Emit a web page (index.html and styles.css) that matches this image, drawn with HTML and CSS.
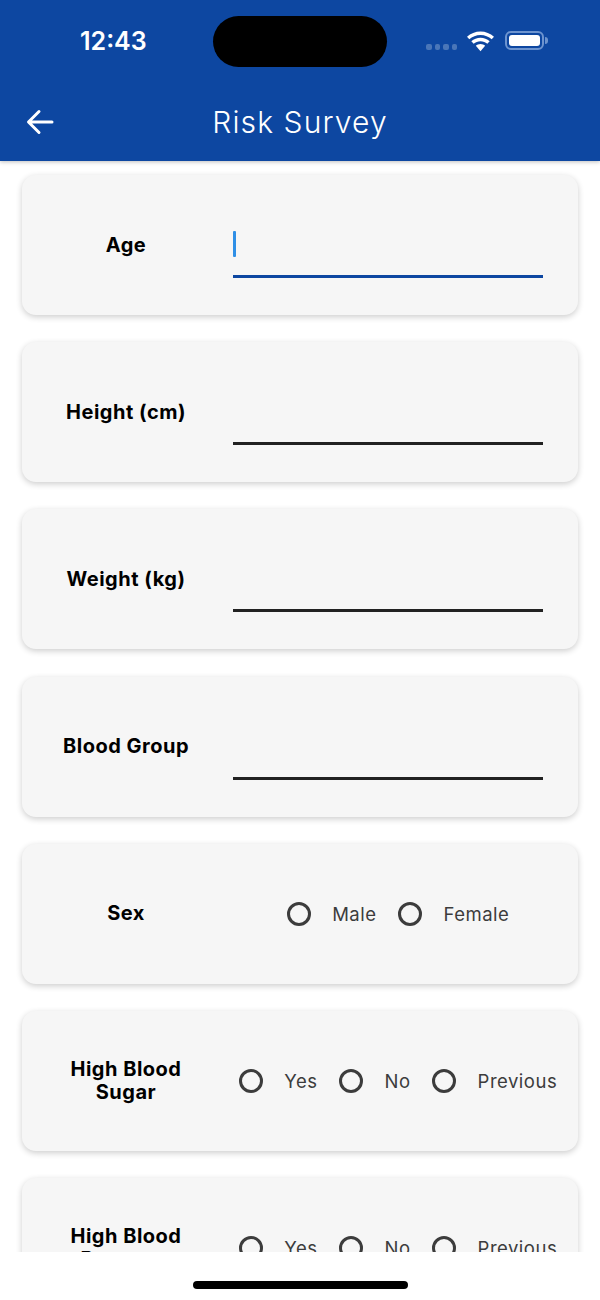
FILE: index.html
```html
<!DOCTYPE html>
<html lang="en">
<head>
<meta charset="utf-8">
<title>Risk Survey</title>
<link rel="stylesheet" href="styles.css">
</head>
<body>
<div class="screen">
  <header class="header">
    <div class="status">
      <div class="time">12:43</div>
      <div class="island"></div>
      <div class="status-icons">
        <div class="signal"><i></i><i></i><i></i><i></i></div>
        <svg class="wifi" viewBox="0 0 26 20" width="31" height="24"><path d="M13 3.200c3.600 0 6.900 1.400 9.400 3.700l1.900-2.100C21.300 2 17.300.3 13 .3S4.700 2 1.700 4.800l1.900 2.100C6.100 4.600 9.400 3.200 13 3.200z" fill="#fff"/><path d="M13 8.500c2.200 0 4.200.8 5.700 2.200l2-2.200C18.600 6.600 15.900 5.500 13 5.500S7.400 6.600 5.300 8.500l2 2.200c1.500-1.400 3.500-2.200 5.700-2.200z" fill="#fff"/><path d="M13 10.800c-1.500 0-2.900.6-3.900 1.500L13 17l3.900-4.700c-1-.9-2.400-1.500-3.900-1.500z" fill="#fff"/></svg>
        <div class="battery"><div class="battery-body"><div class="battery-fill"></div></div><div class="battery-cap"></div></div>
      </div>
    </div>
    <div class="nav">
      <svg class="back" viewBox="0 0 28 26" width="28" height="26"><path d="M26 13H3M13 2.500 2.500 13 13 23.500" fill="none" stroke="#fff" stroke-width="3" stroke-linecap="round" stroke-linejoin="round"/></svg>
      <h1 class="title">Risk Survey</h1>
    </div>
  </header>
  <main class="scroller">
    <section class="card">
      <div class="label">Age</div>
      <div class="field active"><span class="caret"></span></div>
    </section>
    <section class="card">
      <div class="label">Height (cm)</div>
      <div class="field"></div>
    </section>
    <section class="card">
      <div class="label">Weight (kg)</div>
      <div class="field"></div>
    </section>
    <section class="card">
      <div class="label">Blood Group</div>
      <div class="field"></div>
    </section>
    <section class="card">
      <div class="label">Sex</div>
      <div class="options">
        <span class="radio"></span><span class="opt">Male</span>
        <span class="radio"></span><span class="opt">Female</span>
      </div>
    </section>
    <section class="card">
      <div class="label">High Blood<br>Sugar</div>
      <div class="options">
        <span class="radio"></span><span class="opt">Yes</span>
        <span class="radio"></span><span class="opt">No</span>
        <span class="radio"></span><span class="opt">Previous</span>
      </div>
    </section>
    <section class="card">
      <div class="label">High Blood<br>Pressure</div>
      <div class="options">
        <span class="radio"></span><span class="opt">Yes</span>
        <span class="radio"></span><span class="opt">No</span>
        <span class="radio"></span><span class="opt">Previous</span>
      </div>
    </section>
  </main>
  <footer class="home"><div class="home-bar"></div></footer>
</div>
</body>
</html>
```

FILE: styles.css
```css
* { box-sizing: border-box; }
html, body { margin: 0; padding: 0; background: #fff; }
body { font-family: "Inter", "Liberation Sans", sans-serif; }
.screen { width: 600px; height: 1300px; display: flex; flex-direction: column; overflow: hidden; }

.header { height: 161px; flex: none; background: #0d47a1; color: #fff; box-shadow: 0 1px 4px rgba(0,0,0,.25); position: relative; z-index: 2; }
.status { height: 67px; padding-top: 16px; display: grid; grid-template-columns: 213px 174px 213px; }
.time { font-size: 25px; font-weight: 600; line-height: 50px; padding-left: 80px; }
.island { height: 51px; background: #000; border-radius: 26px; }
.status-icons { display: flex; align-items: center; padding-left: 39px; }
.signal { display: flex; gap: 3px; margin-top: 11px; margin-right: 8px; }
.signal i { width: 5.500px; height: 5.500px; border-radius: 2px; background: #4a76b8; }
.wifi { margin-top: 2px; }
.battery { display: flex; align-items: center; margin-left: 9px; margin-top: -3px; }
.battery-body { width: 39px; height: 19px; border: 2px solid #6d94cf; border-radius: 6px; padding: 2px; }
.battery-fill { width: 100%; height: 100%; background: #fff; border-radius: 3px; }
.battery-cap { width: 3px; height: 7px; background: #6d94cf; border-radius: 0 3px 3px 0; margin-left: 1px; }

.nav { height: 94px; padding-top: 16px; display: grid; grid-template-columns: 600px; align-items: center; position: relative; }
.back { position: absolute; left: 26px; top: 42px; }
.title { margin: 0; font-size: 30px; font-weight: 300; text-align: center; letter-spacing: 1.1px; }

.scroller { flex: 1; min-height: 0; overflow: hidden; padding: 14px 22px 0; display: flex; flex-direction: column; gap: 27.200px; }
.card { flex: none; height: 140px; background: #f6f6f6; border-radius: 14px; box-shadow: 0 2px 6px rgba(0,0,0,.2); display: grid; grid-template-columns: 208px 1fr; align-items: center; }
.label { font-size: 20px; font-weight: 700; line-height: 23px; text-align: center; color: #000; letter-spacing: .5px; }
.field { width: 310px; height: 66px; margin-left: 2.500px; border-bottom: 3px solid #222; display: flex; align-items: center; }
.field.active { border-bottom-color: #0d47a1; }
.caret { width: 3px; height: 26px; background: #2f8fe6; border-radius: 1px; }

.options { display: flex; align-items: center; justify-content: center; gap: 21.500px; margin-left: -12px; }
.radio { width: 24px; height: 24px; border: 3px solid #3c3c3c; border-radius: 50%; flex: none; }
.opt { font-size: 18.500px; color: #3c3c3c; white-space: nowrap; letter-spacing: .5px; }

.home { height: 48px; flex: none; background: #fff; display: flex; justify-content: center; padding-top: 29px; position: relative; z-index: 1; }
.home-bar { width: 215px; height: 8px; background: #000; border-radius: 4px; }
```
